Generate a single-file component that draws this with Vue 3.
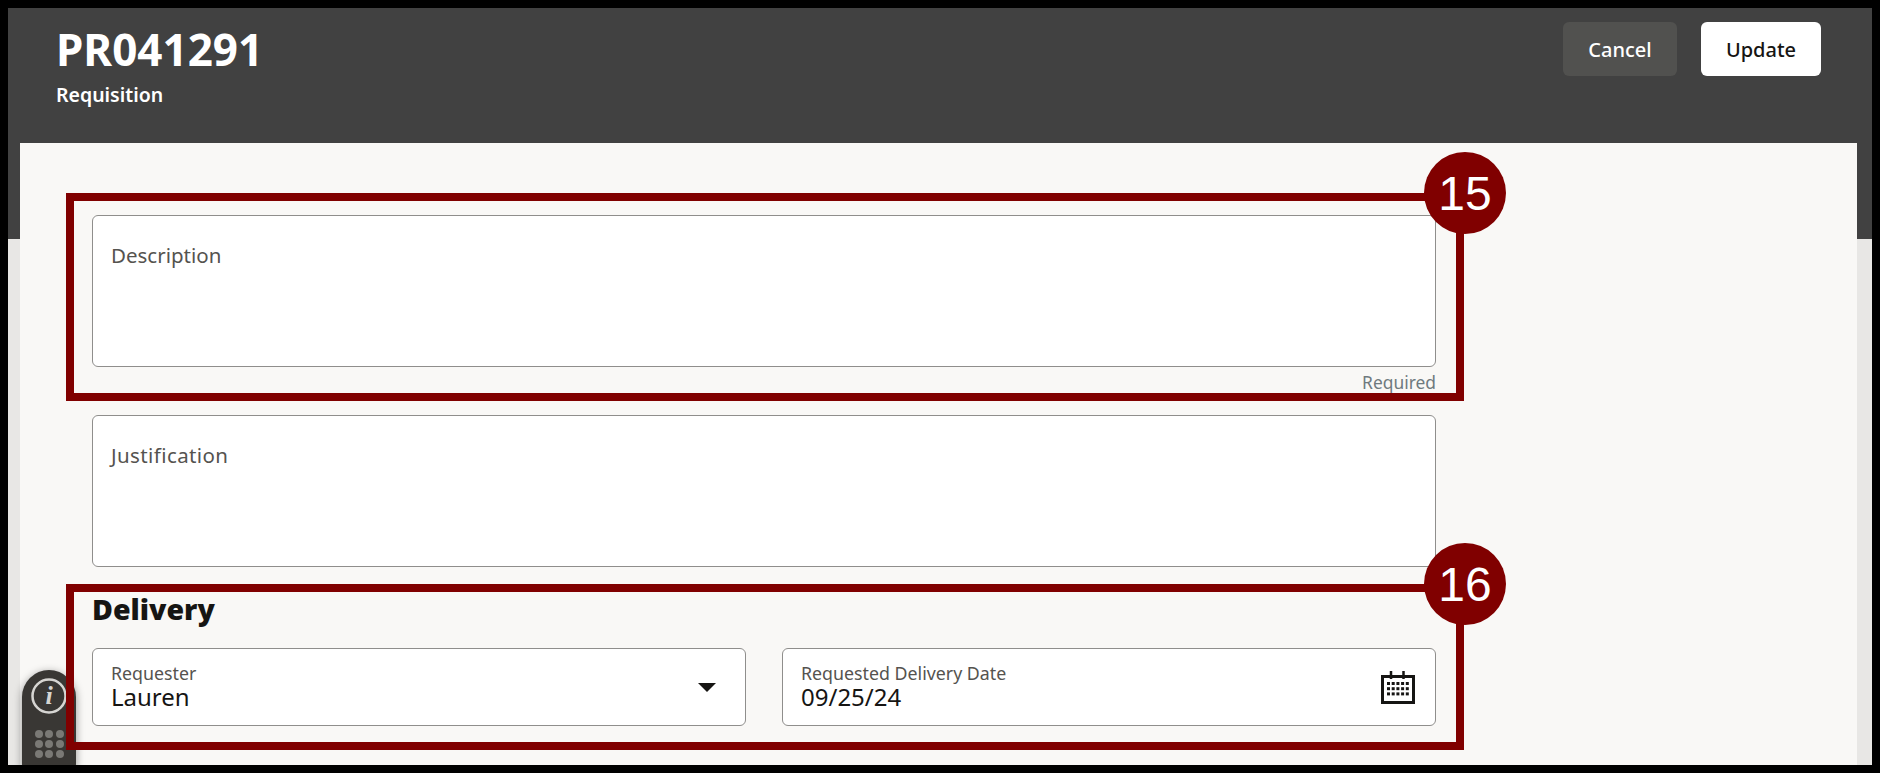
<template>
  <div class="frame">
    <header class="top">
      <div>
        <h1 class="title">PR041291</h1>
        <div class="subtitle">Requisition</div>
      </div>
      <div class="actions">
        <button class="btn cancel">Cancel</button>
        <button class="btn update">Update</button>
      </div>
    </header>

    <main class="panel">
      <div class="form">
        <div class="area"><span class="area-label">Description</span></div>
        <div class="required">Required</div>
        <div class="area"><span class="area-label wide">Justification</span></div>

        <h2 class="section">Delivery</h2>
        <div class="row">
          <div class="field">
            <div class="field-text">
              <span class="field-label">Requester</span>
              <span class="field-value">Lauren</span>
            </div>
            <span class="caret"></span>
          </div>
          <div class="field">
            <div class="field-text">
              <span class="field-label">Requested Delivery Date</span>
              <span class="field-value">09/25/24</span>
            </div>
            <svg class="cal" width="34" height="34" viewBox="0 0 34 34">
              <path d="M1.5 6.5h31v26h-31z" fill="#fff" stroke="#161513" stroke-width="3" />
              <path d="M10 1v8M22.500 1v8" stroke="#161513" stroke-width="2.500" />
              <g fill="#161513">
                <rect v-for="c in calCells" :key="c.k" :x="c.x" :y="c.y" width="3" height="3" />
              </g>
            </svg>
          </div>
        </div>
      </div>
    </main>

    <div class="helper">
      <svg class="info" width="36" height="36" viewBox="0 0 36 36">
        <circle cx="18" cy="18" r="16.500" fill="none" stroke="#d6d5d2" stroke-width="2.500" />
        <text x="18" y="26" text-anchor="middle" class="info-i">i</text>
      </svg>
      <div class="dots">
        <span v-for="n in 9" :key="n" class="dot"></span>
      </div>
    </div>

    <div class="mark mark-a"><span class="badge">15</span></div>
    <div class="mark mark-b"><span class="badge">16</span></div>
  </div>
</template>

<script setup>
const calCells = []
for (let r = 0; r < 3; r++) {
  for (let c = 0; c < 5; c++) {
    calCells.push({ k: r + '-' + c, x: 6 + c * 4.7, y: 12 + r * 5.2 })
  }
}
</script>

<style>
body {
  background: #000;
}
</style>

<style scoped>
.frame {
  position: relative;
  box-sizing: border-box;
  width: 1880px;
  height: 773px;
  border: 8px solid #000;
  background: #e8e7e5;
  overflow: hidden;
  font-family: "Noto Sans", "Open Sans", sans-serif;
}

.top {
  box-sizing: border-box;
  height: 231px;
  background: #414141;
  color: #fff;
  padding: 14px 51px 0 48px;
  display: flex;
  justify-content: space-between;
  align-items: flex-start;
}

.title {
  margin: 0;
  font-size: 44px;
  line-height: 54px;
  font-weight: 700;
}

.subtitle {
  margin-top: 6px;
  font-size: 19.5px;
  line-height: 26px;
  font-weight: 600;
}

.actions {
  display: flex;
  gap: 24px;
}

.btn {
  height: 54px;
  border: none;
  border-radius: 6px;
  font-family: inherit;
  font-size: 20px;
  font-weight: 500;
}

.cancel {
  width: 114px;
  background: #51514f;
  color: #fff;
}

.update {
  width: 120px;
  background: #fff;
  color: #161513;
}

.panel {
  box-sizing: border-box;
  height: 640px;
  margin: -96px 15px 0 12px;
  padding: 72px 0 0 72px;
  background: #f9f8f6;
}

.form {
  width: 1344px;
}

.area {
  box-sizing: border-box;
  height: 152px;
  padding: 26px 18px;
  background: #fff;
  border: 1px solid #8f8e8c;
  border-radius: 6px;
}

.area-label {
  font-size: 20.5px;
  line-height: 26px;
  color: #55534f;
}

.wide {
  letter-spacing: 0.4px;
}

.required {
  height: 48px;
  padding-top: 3px;
  box-sizing: border-box;
  text-align: right;
  font-size: 17.4px;
  line-height: 24px;
  color: #6f7a7e;
}

.section {
  margin: 24px 0 0;
  font-size: 28.5px;
  line-height: 36px;
  font-weight: 900;
  color: #161513;
}

.row {
  display: grid;
  grid-template-columns: 654px 654px;
  gap: 36px;
  margin-top: 21px;
}

.field {
  box-sizing: border-box;
  height: 78px;
  padding: 0 20px 0 18px;
  background: #fff;
  border: 1px solid #8f8e8c;
  border-radius: 6px;
  display: flex;
  align-items: center;
  justify-content: space-between;
}

.field-text {
  display: flex;
  flex-direction: column;
  padding-bottom: 2px;
}

.field-label {
  font-size: 17.8px;
  line-height: 20px;
  color: #55534f;
}

.field-value {
  margin-top: 1px;
  font-size: 24px;
  line-height: 26px;
  color: #161513;
}

.caret {
  width: 0;
  height: 0;
  margin-right: 9px;
  border-left: 9px solid transparent;
  border-right: 9px solid transparent;
  border-top: 9px solid #161513;
}

.cal {
  display: block;
}

.info-i {
  font-family: "Liberation Serif", serif;
  font-style: italic;
  font-weight: 700;
  font-size: 26px;
  fill: #d6d5d2;
}

.helper {
  position: absolute;
  left: 14px;
  top: 662px;
  box-sizing: border-box;
  width: 54px;
  height: 120px;
  padding-top: 8px;
  border-radius: 27px;
  background: #393734;
  box-shadow: 0 2px 8px rgba(0, 0, 0, 0.4);
  display: flex;
  flex-direction: column;
  align-items: center;
}

.dots {
  margin-top: 16px;
  display: grid;
  grid-template-columns: repeat(3, 8px);
  gap: 2px;
  column-gap: 2.500px;
}

.dot {
  width: 8px;
  height: 8px;
  border-radius: 50%;
  background: #7a7975;
}

.mark {
  position: absolute;
  box-sizing: border-box;
  border: 8px solid #800000;
}

.mark-a {
  left: 58px;
  top: 185px;
  width: 1398px;
  height: 208px;
}

.mark-b {
  left: 58px;
  top: 576px;
  width: 1398px;
  height: 166px;
}

.badge {
  position: absolute;
  right: -50px;
  top: -49px;
  width: 82px;
  height: 82px;
  border-radius: 50%;
  background: #800000;
  color: #fff;
  font-family: "Liberation Sans", Arial, sans-serif;
  font-size: 48px;
  display: flex;
  align-items: center;
  justify-content: center;
}
</style>
